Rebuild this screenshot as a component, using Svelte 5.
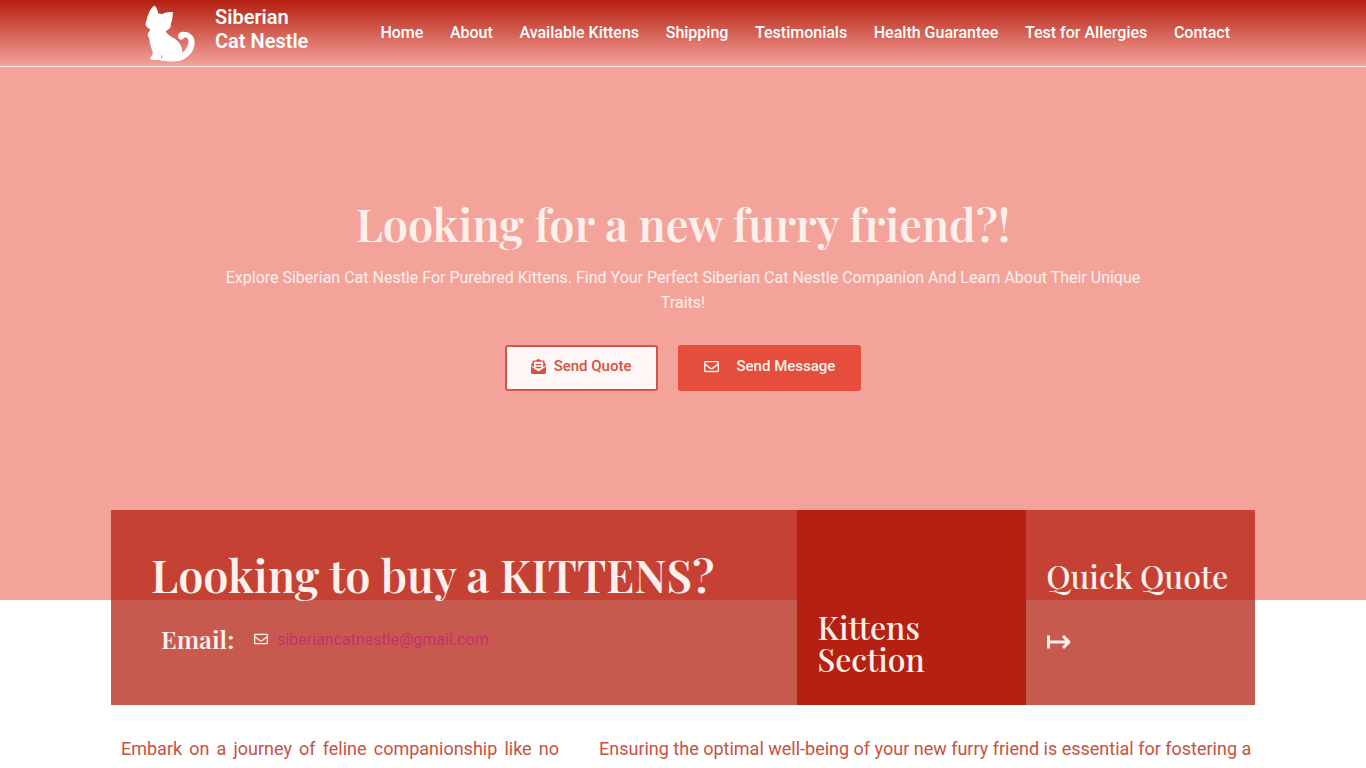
<script>
  const nav = ['Home', 'About', 'Available Kittens', 'Shipping', 'Testimonials', 'Health Guarantee', 'Test for Allergies', 'Contact'];
</script>

{#snippet envelope(size)}
  <svg width={size} height={size} viewBox="0 0 512 512" fill="currentColor" aria-hidden="true">
    <path d="M464 64H48C21.500 64 0 85.500 0 112v288c0 26.500 21.500 48 48 48h416c26.500 0 48-21.500 48-48V112c0-26.500-21.500-48-48-48zm0 48v40.800c-22.400 18.300-58.200 46.700-134.600 106.500-16.800 13.200-50.200 45.100-73.400 44.700-23.200.4-56.600-31.500-73.400-44.700C106.200 199.500 70.400 171.100 48 152.800V112h416zM48 400V214.400c22.900 18.300 55.400 43.900 104.900 82.600 21.900 17.200 60.100 55.200 103.100 55 42.700.2 80.500-37.200 103.100-54.900 49.500-38.800 82-64.400 104.900-82.700V400H48z" />
  </svg>
{/snippet}

<div class="hero">
  <header>
    <div class="bar">
      <a class="brand" href="#home">
        <svg width="50" height="57" viewBox="105 14 152 171" fill="currentColor" aria-hidden="true">
          <path d="M134 14C126 19 119 29 115 41C112 49 110 57 108 66C104 72 109 79 115 83C122 87 121 91 117 94C110 102 114 109 118 115C119 128 122 140 127 151C130 160 129 164 121 173C119 179 125 181 136 180L150 179C156 185 166 182 178 184C202 186 219 182 229 173C246 164 256 145 256 125C255 107 241 94 223 94C209 94 202 104 207 113C211 121 220 119 224 113C232 109 238 115 237 127C235 141 228 150 219 158C219 144 213 130 204 122C193 112 175 108 168 93C171 90 177 88 181 83C185 78 182 73 184 69C187 62 189 49 190 34C177 34 165 35 157 41L145 38C144 28 140 20 134 14Z" />
          <path class="line" d="M156 166L155 175" />
        </svg>
        <span>Siberian<br />Cat Nestle</span>
      </a>
      <nav>
        {#each nav as item}<a href="#{item.toLowerCase().replaceAll(' ', '-')}">{item}</a>{/each}
      </nav>
    </div>
  </header>
  <section class="intro">
    <h1>Looking for a new furry friend?!</h1>
    <p>Explore Siberian Cat Nestle For Purebred Kittens. Find Your Perfect Siberian Cat Nestle Companion And Learn About Their Unique Traits!</p>
    <div class="actions">
      <button class="quote" type="button">
        <svg width="15" height="15" viewBox="0 0 512 512" fill="currentColor" aria-hidden="true">
          <path d="M176 216h160c8.800 0 16-7.200 16-16v-16c0-8.800-7.200-16-16-16H176c-8.800 0-16 7.200-16 16v16c0 8.800 7.200 16 16 16zm-16 80c0 8.800 7.200 16 16 16h160c8.800 0 16-7.200 16-16v-16c0-8.800-7.200-16-16-16H176c-8.800 0-16 7.200-16 16v16zm96 121.100c-16.400 0-32.800-5.100-46.900-15.200L0 250.900V464c0 26.500 21.500 48 48 48h416c26.500 0 48-21.500 48-48V250.900L302.900 401.900c-14 10.100-30.500 15.200-46.900 15.200zm237.600-254.200c-8.900-6.900-17.200-13.500-29.600-22.800V96c0-26.500-21.500-48-48-48h-77.600c-3-2.200-5.900-4.300-9-6.600C312.600 29.200 279.200-.4 256 0c-23.200-.4-56.600 29.200-73.400 41.400-3.200 2.300-6 4.400-9 6.600H96c-26.500 0-48 21.500-48 48v44.100c-12.400 9.300-20.800 15.800-29.600 22.800A48 48 0 0 0 0 200.700v10.700l96 69.300V96h320v184.700l96-69.300v-10.700c0-14.700-6.800-28.700-18.400-37.800z" />
        </svg>
        Send Quote
      </button>
      <button class="message" type="button">{@render envelope(15)} Send Message</button>
    </div>
  </section>
</div>

<main>
  <div class="cards">
    <section class="card buy">
      <h2>Looking to buy a KITTENS?</h2>
      <div class="contact">
        <h3>Email:</h3>
        {@render envelope(14)}
        <a href="mailto:siberiancatnestle@gmail.com">siberiancatnestle@gmail.com</a>
      </div>
    </section>
    <section class="card kittens"><h2>Kittens Section</h2></section>
    <section class="card quick">
      <h2>Quick Quote</h2>
      <a href="#quote" aria-label="Quick Quote">
        <svg width="26" height="16" viewBox="0 0 26 16" fill="none" stroke="currentColor" stroke-width="3" stroke-linejoin="round" aria-hidden="true">
          <path d="M2.500 1.500V14.500M2.500 8H23M17 2L23 8L17 14" />
        </svg>
      </a>
    </section>
  </div>
  <div class="copy">
    <p>Embark on a journey of feline companionship like no</p>
    <p>Ensuring the optimal well-being of your new furry friend is essential for fostering a</p>
  </div>
</main>

<style>
  :global(body) {
    margin: 0;
    background: #fff;
    font-family: Roboto, sans-serif;
  }
  h1, h2, h3, p { margin: 0; }
  h1, h2, h3 { font-family: 'Playfair Display', 'Liberation Serif', serif; }
  a { color: inherit; text-decoration: none; }
  svg { flex: none; }

  .hero {
    min-height: 600px;
    background: #f4a39b;
    color: #fff0ec;
  }
  header {
    background: linear-gradient(#b41e0f, #f4a39b);
    border-bottom: 1px solid #fff0ec;
    color: #fff;
  }
  .bar {
    display: flex;
    justify-content: space-between;
    align-items: center;
    gap: 72px;
    box-sizing: border-box;
    max-width: 1140px;
    height: 66px;
    margin: 0 auto;
    padding: 0 23px 0 32px;
  }
  .brand {
    display: flex;
    gap: 20px;
    font-size: 20px;
    font-weight: 600;
    line-height: 24px;
  }
  .brand .line { stroke: #e28e80; stroke-width: 3; }
  nav {
    display: flex;
    flex: 1;
    justify-content: space-between;
  }
  nav a {
    font-size: 16px;
    font-weight: 500;
    line-height: 24px;
    white-space: nowrap;
  }
  .intro {
    max-width: 920px;
    margin: 0 auto;
    padding-top: 132px;
    text-align: center;
  }
  h1, .buy h2 { font-size: 45px; font-weight: 600; line-height: 48px; }
  .intro p {
    margin-top: 18px;
    font-size: 16px;
    line-height: 25px;
  }
  .actions {
    display: flex;
    justify-content: center;
    gap: 20px;
    margin-top: 30px;
  }
  button {
    display: flex;
    align-items: center;
    height: 46px;
    padding: 0 24px 4px;
    border: 2px solid #e54d3c;
    border-radius: 3px;
    font: 500 15px Roboto, sans-serif;
    cursor: pointer;
  }
  .quote { gap: 8px; background: #fff7f6; color: #d9503f; border-color: #d0574a; }
  .message { gap: 18px; background: #e54d3c; color: #fff0ec; }

  main {
    max-width: 1144px;
    margin: -90px auto 0;
  }
  .cards {
    display: grid;
    grid-template-columns: 3fr 1fr 1fr;
    min-height: 195px;
    color: #fff0ec;
  }
  .card { background: rgba(178, 29, 14, 0.73); }
  .buy { padding: 40px 40px 0; }
  .contact {
    display: flex;
    align-items: center;
    margin-top: 24px;
    padding-left: 10px;
  }
  h3 { margin-right: 20px; font-size: 25px; font-weight: 600; line-height: 34px; }
  .contact a { margin-left: 9px; color: #c9306a; font-size: 16px; }
  .kittens {
    display: flex;
    align-items: flex-end;
    padding: 0 20px 30px;
    background: #b42112;
  }
  .kittens h2, .quick h2 {
    font-size: 32px;
    font-weight: 500;
    line-height: 32px;
  }
  .quick { padding: 50px 20px 0; }
  .quick a { display: flex; margin-top: 42px; }
  .copy {
    display: grid;
    grid-template-columns: 458fr 666fr;
    gap: 20px;
    padding-top: 30px;
    color: #c9513f;
    font-size: 18px;
    line-height: 27px;
  }
  .copy p {
    padding: 0 10px;
    text-align: justify;
    text-align-last: justify;
  }
  .copy p + p { padding-right: 0; text-align-last: left; }
</style>
